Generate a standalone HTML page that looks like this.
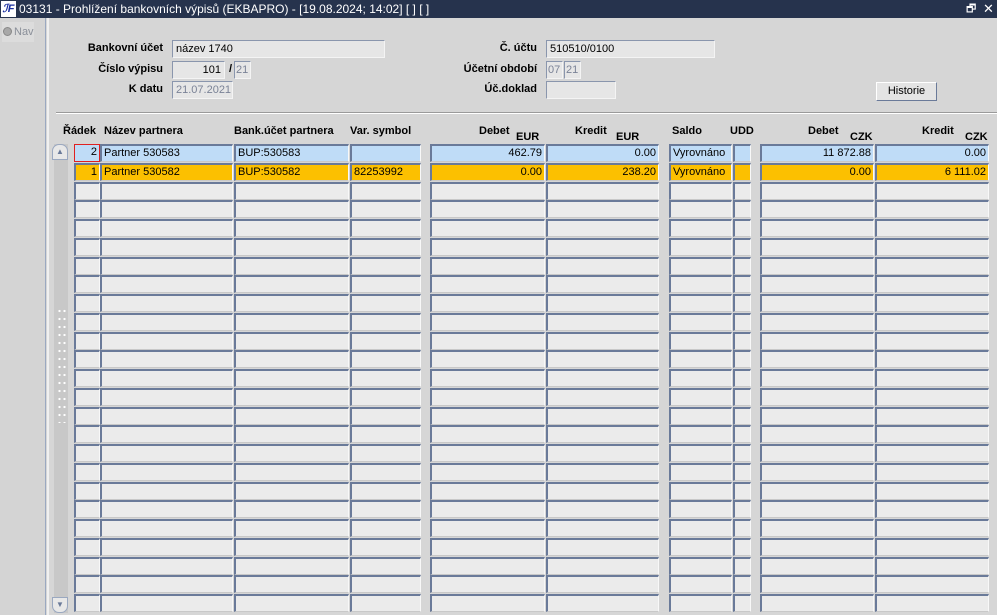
<!DOCTYPE html>
<html><head><meta charset="utf-8"><style>
*{margin:0;padding:0;box-sizing:border-box}
body{width:997px;height:615px;overflow:hidden;background:#d6d6d6;font-family:"Liberation Sans",Arial,sans-serif;font-size:11px;color:#000;position:relative}
.t{position:absolute;left:0;top:0;width:997px;height:18px;background:#26334d;color:#fff;font-size:12px;line-height:18px}
.logo{position:absolute;left:1px;top:1px;width:15px;height:16px;background:#fff;color:#1a2fa0;font-weight:bold;font-style:italic;font-size:11px;line-height:16px;text-align:center}
.side{position:absolute;left:0;top:18px;width:46px;height:597px;background:#d4d4d4;border-right:1px solid #9aa8c0}
.side2{position:absolute;left:47px;top:18px;width:2px;height:597px;background:#f0f0f0}
.l{position:absolute;font-weight:bold;text-align:right;white-space:nowrap}
.f{position:absolute;height:18px;background:#e6e6e6;border:1px solid;border-color:#8a96ad #f4f4f4 #f4f4f4 #8a96ad;line-height:16px;padding:0 3px;white-space:nowrap}
.g{color:#7a8296}
.c{position:absolute;height:18px;background:#ebebeb;border-top:2px solid #6a7a99;border-left:2px solid #6a7a99;border-right:1px solid #f8f8f8;border-bottom:1px solid #c8c8c8;line-height:15px;padding:0 2px;white-space:nowrap;overflow:hidden}
.b{background:#bfdcf7}.o{background:#fcc000}
.r{text-align:right}
.h{position:absolute;top:125px;font-weight:bold}
.e{top:131px}
</style></head><body>
<div class="t"><div class="logo">ℐF</div><span style="position:absolute;left:19px">03131 - Prohlížení bankovních výpisů (EKBAPRO) - [19.08.2024; 14:02] [ ] [ ]</span><span style="position:absolute;left:966px;top:0;font-size:11px">🗗</span><span style="position:absolute;left:983px;font-size:13px">✕</span></div>
<div class="side"><div style="position:absolute;left:2px;top:4px;width:32px;height:20px;background:#dcdcdc;color:#8a8f99;font-size:11px;line-height:20px"><span style="display:inline-block;width:9px;height:9px;border-radius:50%;background:#a8a8a8;border:1px solid #888;margin:0 2px 0 1px;vertical-align:-1px"></span>Nav</div></div>
<div class="side2"></div>

<div class="l" style="right:834px;top:42px">Bankovní účet</div>
<div class="f" style="left:172px;top:40px;width:213px">název 1740</div>
<div class="l" style="right:834px;top:63px">Číslo výpisu</div>
<div class="f r" style="left:172px;top:61px;width:53px">101</div>
<div class="l" style="left:229px;top:63px">/</div>
<div class="f g" style="left:234px;top:61px;width:17px;padding:0 1px">21</div>
<div class="l" style="right:834px;top:83px">K datu</div>
<div class="f g" style="left:172px;top:81px;width:61px">21.07.2021</div>

<div class="l" style="right:460px;top:42px">Č. účtu</div>
<div class="f" style="left:546px;top:40px;width:169px">510510/0100</div>
<div class="l" style="right:460px;top:63px">Účetní období</div>
<div class="f g" style="left:546px;top:61px;width:17px;padding:0 1px">07</div>
<div class="f g" style="left:564px;top:61px;width:17px;padding:0 1px">21</div>
<div class="l" style="right:460px;top:83px">Úč.doklad</div>
<div class="f" style="left:546px;top:81px;width:70px"></div>
<div style="position:absolute;left:876px;top:82px;width:61px;height:19px;background:#e4e4e4;border:1px solid;border-color:#fff #6a7a99 #6a7a99 #fff;text-align:center;line-height:17px">Historie</div>

<div style="position:absolute;left:56px;top:112px;width:941px;height:1px;background:#9a9a9a"></div>
<div style="position:absolute;left:56px;top:113px;width:941px;height:1px;background:#fff"></div>

<div class="h" style="left:63px">Řádek</div>
<div class="h" style="left:104px">Název partnera</div>
<div class="h" style="left:234px">Bank.účet partnera</div>
<div class="h" style="left:350px">Var. symbol</div>
<div class="h" style="left:479px">Debet</div><div class="h e" style="left:516px">EUR</div>
<div class="h" style="left:575px">Kredit</div><div class="h e" style="left:616px">EUR</div>
<div class="h" style="left:672px">Saldo</div>
<div class="h" style="left:730px">UDD</div>
<div class="h" style="left:808px">Debet</div><div class="h e" style="left:850px">CZK</div>
<div class="h" style="left:922px">Kredit</div><div class="h e" style="left:965px">CZK</div>

<div style="position:absolute;left:54px;top:144px;width:14px;height:469px;background:#c8c8c8"></div>
<div style="position:absolute;left:52px;top:144px;width:16px;height:16px;background:#e8e8e8;border:1px solid #9aa8c0;border-radius:7px 7px 0 0;font-size:8px;color:#6a7a99;text-align:center;line-height:14px">▲</div>
<div style="position:absolute;left:52px;top:597px;width:16px;height:16px;background:#e8e8e8;border:1px solid #9aa8c0;border-radius:0 0 7px 7px;font-size:8px;color:#6a7a99;text-align:center;line-height:14px">▼</div>
<div style="position:absolute;left:57px;top:307px;width:9px;height:116px;background-image:radial-gradient(circle,#fff 1px,transparent 1.3px);background-size:5px 8px"></div>

<div id="g">
<div class="c b r" style="left:74px;top:144px;width:26px;border:1px solid #e02020">2</div>
<div class="c b" style="left:100px;top:144px;width:133px">Partner 530583</div>
<div class="c b" style="left:234px;top:144px;width:115px">BUP:530583</div>
<div class="c b" style="left:350px;top:144px;width:71px"></div>
<div class="c b r" style="left:430px;top:144px;width:115px">462.79</div>
<div class="c b r" style="left:546px;top:144px;width:113px">0.00</div>
<div class="c b" style="left:669px;top:144px;width:63px">Vyrovnáno</div>
<div class="c b" style="left:733px;top:144px;width:18px"></div>
<div class="c b r" style="left:760px;top:144px;width:114px">11 872.88</div>
<div class="c b r" style="left:875px;top:144px;width:114px">0.00</div>

<div class="c o r" style="left:74px;top:163px;width:26px">1</div>
<div class="c o" style="left:100px;top:163px;width:133px">Partner 530582</div>
<div class="c o" style="left:234px;top:163px;width:115px">BUP:530582</div>
<div class="c o" style="left:350px;top:163px;width:71px">82253992</div>
<div class="c o r" style="left:430px;top:163px;width:115px">0.00</div>
<div class="c o r" style="left:546px;top:163px;width:113px">238.20</div>
<div class="c o" style="left:669px;top:163px;width:63px">Vyrovnáno</div>
<div class="c o" style="left:733px;top:163px;width:18px"></div>
<div class="c o r" style="left:760px;top:163px;width:114px">0.00</div>
<div class="c o r" style="left:875px;top:163px;width:114px">6 111.02</div>
</div>
<script>
var cols=[[74,26],[100,133],[234,115],[350,71],[430,115],[546,113],[669,63],[733,18],[760,114],[875,114]];
var h='';for(var r=2;r<25;r++){var y=Math.round(144+r*18.75);for(var i=0;i<cols.length;i++){h+='<div class="c" style="left:'+cols[i][0]+'px;top:'+y+'px;width:'+cols[i][1]+'px"></div>';}}
document.getElementById('g').insertAdjacentHTML('beforeend',h);
</script>
</body></html>
